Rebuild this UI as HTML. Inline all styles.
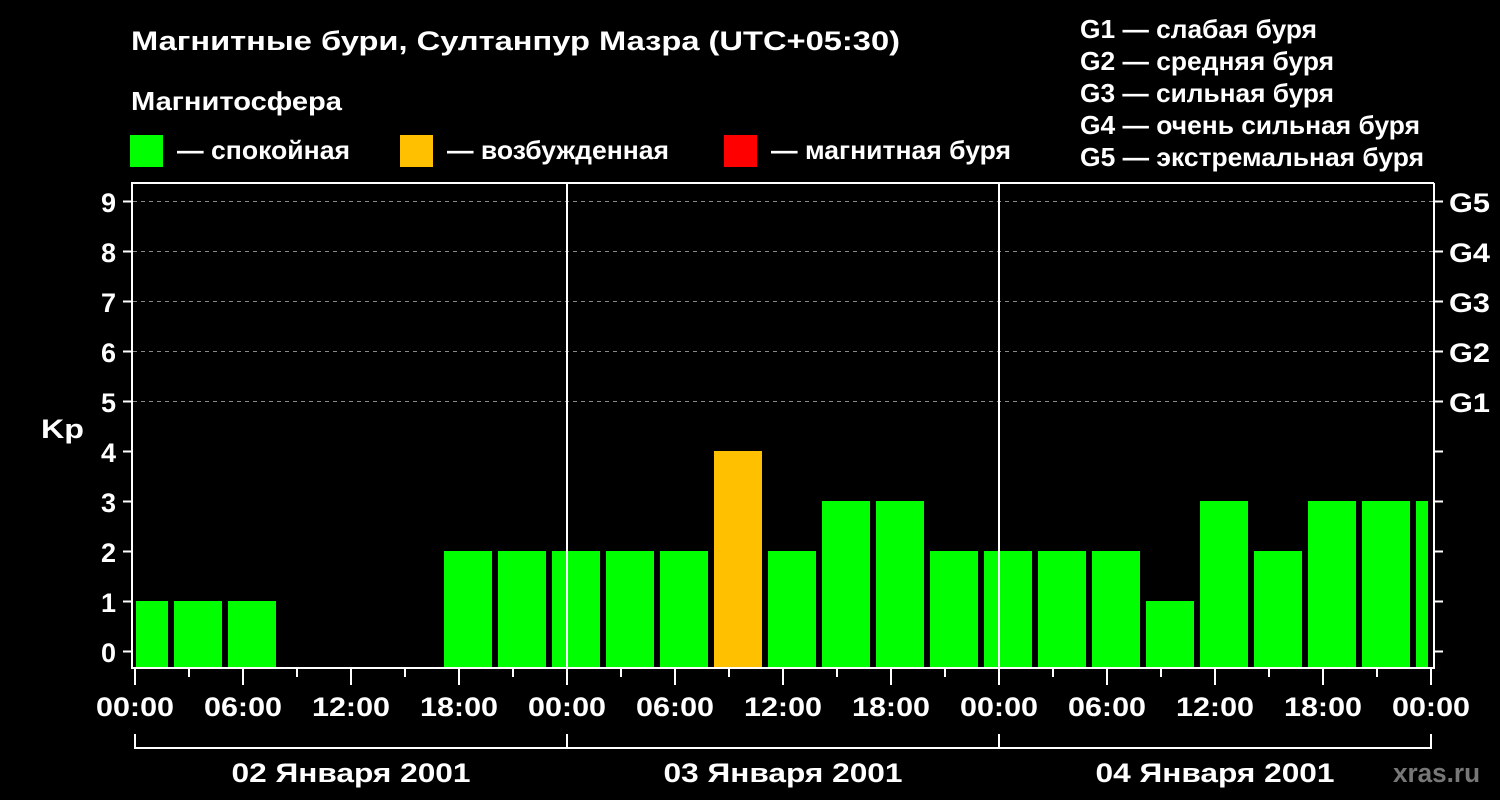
<!DOCTYPE html><html><head><style>body{margin:0;background:#000;width:1500px;height:800px;overflow:hidden}svg{display:block}text{font-family:"Liberation Sans",sans-serif;font-weight:bold;fill:#fff}</style></head><body>
<svg width="1500" height="800" xmlns="http://www.w3.org/2000/svg">
<text x="131" y="50" font-size="27" textLength="769" lengthAdjust="spacingAndGlyphs">Магнитные бури, Султанпур Мазра (UTC+05:30)</text>
<text x="131" y="110" font-size="26" textLength="211" lengthAdjust="spacingAndGlyphs">Магнитосфера</text>
<rect x="130" y="135" width="33" height="32" fill="#00ff00"/><text x="177" y="159" font-size="26" textLength="173" lengthAdjust="spacingAndGlyphs">— спокойная</text>
<rect x="400" y="135" width="33" height="32" fill="#ffc000"/><text x="447" y="159" font-size="26" textLength="222" lengthAdjust="spacingAndGlyphs">— возбужденная</text>
<rect x="724" y="135" width="33" height="32" fill="#ff0000"/><text x="771" y="159" font-size="26" textLength="240" lengthAdjust="spacingAndGlyphs">— магнитная буря</text>
<g font-size="26" lengthAdjust="spacingAndGlyphs"><text x="1080" y="38" textLength="237" lengthAdjust="spacingAndGlyphs">G1 — слабая буря</text><text x="1080" y="70" textLength="254" lengthAdjust="spacingAndGlyphs">G2 — средняя буря</text><text x="1080" y="102" textLength="254" lengthAdjust="spacingAndGlyphs">G3 — сильная буря</text><text x="1080" y="134" textLength="340" lengthAdjust="spacingAndGlyphs">G4 — очень сильная буря</text><text x="1080" y="166" textLength="344" lengthAdjust="spacingAndGlyphs">G5 — экстремальная буря</text></g>
<g stroke="#888" stroke-width="1" stroke-dasharray="4,4"><line x1="133" x2="1433" y1="201.5" y2="201.5"/><line x1="133" x2="1433" y1="251.5" y2="251.5"/><line x1="133" x2="1433" y1="301.5" y2="301.5"/><line x1="133" x2="1433" y1="351.5" y2="351.5"/><line x1="133" x2="1433" y1="401.5" y2="401.5"/></g>
<g fill="#00ff00">
<rect x="136" y="601" width="32" height="66"/><rect x="174" y="601" width="48" height="66"/><rect x="228" y="601" width="48" height="66"/>
<rect x="444" y="551" width="48" height="116"/><rect x="498" y="551" width="48" height="116"/><rect x="552" y="551" width="48" height="116"/><rect x="606" y="551" width="48" height="116"/><rect x="660" y="551" width="48" height="116"/>
<rect x="768" y="551" width="48" height="116"/><rect x="822" y="501" width="48" height="166"/><rect x="876" y="501" width="48" height="166"/><rect x="930" y="551" width="48" height="116"/><rect x="984" y="551" width="48" height="116"/><rect x="1038" y="551" width="48" height="116"/><rect x="1092" y="551" width="48" height="116"/><rect x="1146" y="601" width="48" height="66"/><rect x="1200" y="501" width="48" height="166"/><rect x="1254" y="551" width="48" height="116"/><rect x="1308" y="501" width="48" height="166"/><rect x="1362" y="501" width="48" height="166"/><rect x="1416" y="501" width="12" height="166"/>
</g>
<rect x="714" y="451" width="48" height="216" fill="#ffc000"/>
<g stroke="#fff" stroke-width="2" fill="none">
<polyline points="1434,183 132,183 132,668 1434,668 1434,183"/>
<line x1="567" y1="183" x2="567" y2="668"/><line x1="999" y1="183" x2="999" y2="668"/>
<path d="M123 201.5h9M123 251.5h9M123 301.5h9M123 351.5h9M123 401.5h9M123 451.5h9M123 501.5h9M123 551.5h9M123 601.5h9M123 651.5h9"/>
<path d="M1434 201.5h9M1434 251.5h9M1434 301.5h9M1434 351.5h9M1434 401.5h9M1434 451.5h9M1434 501.5h9M1434 551.5h9M1434 601.5h9M1434 651.5h9"/>
<path d="M135 668v17M189 668v9M243 668v17M297 668v9M351 668v17M405 668v9M459 668v17M513 668v9M567 668v17M621 668v9M675 668v17M729 668v9M783 668v17M837 668v9M891 668v17M945 668v9M999 668v17M1053 668v9M1107 668v17M1161 668v9M1215 668v17M1269 668v9M1323 668v17M1377 668v9M1431 668v17"/>
<path d="M135 734v14h1296v-14M567 734v14M999 734v14"/>
</g>
<g font-size="27" text-anchor="end"><text x="116" y="212">9</text><text x="116" y="262">8</text><text x="116" y="312">7</text><text x="116" y="362">6</text><text x="116" y="412">5</text><text x="116" y="462">4</text><text x="116" y="512">3</text><text x="116" y="562">2</text><text x="116" y="612">1</text><text x="116" y="662">0</text></g>
<text x="41" y="438" font-size="27" textLength="43" lengthAdjust="spacingAndGlyphs">Kp</text>
<g font-size="27"><text x="1449" y="212" textLength="41" lengthAdjust="spacingAndGlyphs">G5</text><text x="1449" y="262" textLength="41" lengthAdjust="spacingAndGlyphs">G4</text><text x="1449" y="312" textLength="41" lengthAdjust="spacingAndGlyphs">G3</text><text x="1449" y="362" textLength="41" lengthAdjust="spacingAndGlyphs">G2</text><text x="1449" y="412" textLength="41" lengthAdjust="spacingAndGlyphs">G1</text></g>
<g font-size="27" text-anchor="middle"><text x="135" y="716" textLength="78" lengthAdjust="spacingAndGlyphs">00:00</text><text x="243" y="716" textLength="78" lengthAdjust="spacingAndGlyphs">06:00</text><text x="351" y="716" textLength="78" lengthAdjust="spacingAndGlyphs">12:00</text><text x="459" y="716" textLength="78" lengthAdjust="spacingAndGlyphs">18:00</text><text x="567" y="716" textLength="78" lengthAdjust="spacingAndGlyphs">00:00</text><text x="675" y="716" textLength="78" lengthAdjust="spacingAndGlyphs">06:00</text><text x="783" y="716" textLength="78" lengthAdjust="spacingAndGlyphs">12:00</text><text x="891" y="716" textLength="78" lengthAdjust="spacingAndGlyphs">18:00</text><text x="999" y="716" textLength="78" lengthAdjust="spacingAndGlyphs">00:00</text><text x="1107" y="716" textLength="78" lengthAdjust="spacingAndGlyphs">06:00</text><text x="1215" y="716" textLength="78" lengthAdjust="spacingAndGlyphs">12:00</text><text x="1323" y="716" textLength="78" lengthAdjust="spacingAndGlyphs">18:00</text><text x="1431" y="716" textLength="78" lengthAdjust="spacingAndGlyphs">00:00</text>
<text x="351" y="782" textLength="239" lengthAdjust="spacingAndGlyphs">02 Января 2001</text><text x="783" y="782" textLength="239" lengthAdjust="spacingAndGlyphs">03 Января 2001</text><text x="1215" y="782" textLength="239" lengthAdjust="spacingAndGlyphs">04 Января 2001</text></g>
<text x="1393" y="782" font-size="27" textLength="87" lengthAdjust="spacingAndGlyphs" style="fill:#777">xras.ru</text>
</svg></body></html>
